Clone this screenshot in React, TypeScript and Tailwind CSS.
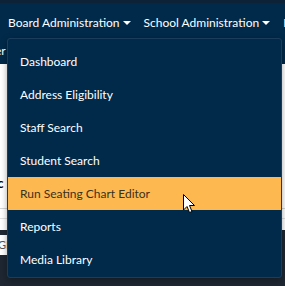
const MENU_ITEMS = [
  "Dashboard",
  "Address Eligibility",
  "Staff Search",
  "Student Search",
  "Run Seating Chart Editor",
  "Reports",
  "Media Library",
];

const ACTIVE_INDEX = 4;

function Caret() {
  return (
    <span className="ml-[3px] inline-block h-0 w-0 border-x-[4px] border-t-[4px] border-x-transparent border-t-white align-middle" />
  );
}

function Cursor() {
  return (
    <svg
      className="pointer-events-none absolute left-[183px] top-[194px]"
      width="13"
      height="20"
      viewBox="0 0 13 20"
    >
      <path
        d="M0.5 0.5 L0.5 16 L4 12.5 L6.5 18.5 L9 17.5 L6.5 11.5 L11.5 11.5 Z"
        fill="#fff"
        stroke="#000"
        strokeWidth="1"
        strokeLinejoin="round"
      />
    </svg>
  );
}

export default function App() {
  return (
    <div
      className="relative h-[286px] w-[285px] overflow-hidden bg-white text-[12px]"
      style={{ fontFamily: 'Lato, "Noto Sans", sans-serif' }}
    >
      {/* page behind the menu */}
      <div className="flex h-full flex-col">
        <div className="h-[3px] bg-[#0d2236]" />
        <div className="flex h-[35px] items-center gap-[13px] whitespace-nowrap bg-[#012a4a] pb-[1px] pl-[8px] pt-[5px] text-white">
          <span>
            Board Administration
            <Caret />
          </span>
          <span>
            School Administration
            <Caret />
          </span>
          <span>E</span>
        </div>
        <div className="flex h-[26px] items-center bg-[#012a4a] text-white">
          <span className="-ml-[5px]">er</span>
        </div>
        <div className="flex h-[144px] items-end bg-white pb-[15px]">
          <span className="-ml-[6px] text-[13px] font-bold text-black">ic</span>
        </div>
        <div className="h-[10px] border-t border-[#d6d6d6] bg-white" />
        <div className="h-[12px] border-t border-[#e2e2e2] bg-white" />
        <div className="flex flex-1 flex-col bg-[#1e2732] pt-[5px]">
          <div className="flex h-[20px] w-[40px] items-center bg-white text-[11px] text-[#555]">
            <span className="-ml-[2px]">GR</span>
          </div>
        </div>
      </div>

      {/* dropdown menu */}
      <div className="absolute left-[7px] top-[38px] w-[275px] rounded-[3px] border border-[#1b3d5b] bg-[#012a4a] pb-[1px] pt-[6px] shadow-[0_2px_6px_rgba(0,0,0,0.35)]">
        {MENU_ITEMS.map((label, index) => (
          <div
            key={label}
            className={
              index === ACTIVE_INDEX
                ? "flex h-[33px] items-center bg-[#fdb94f] pl-[12px] pt-[1px] text-[#3a3120]"
                : "flex h-[33px] items-center pl-[12px] pt-[1px] text-white"
            }
          >
            {label}
          </div>
        ))}
      </div>

      <Cursor />
    </div>
  );
}
